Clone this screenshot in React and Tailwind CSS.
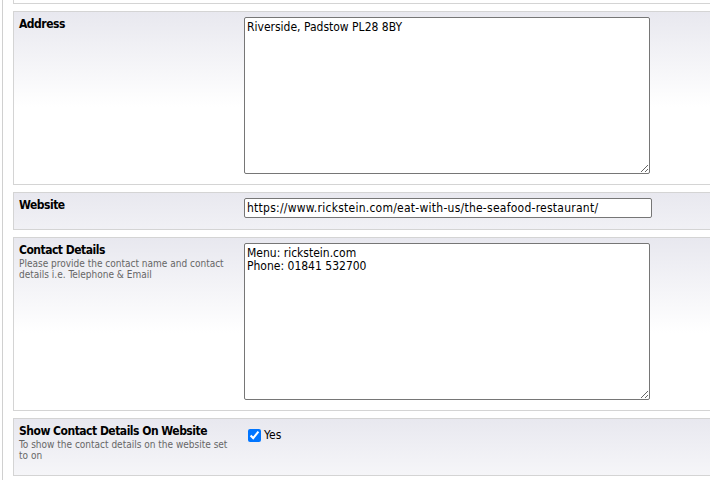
import { useState } from "react";

const panelBg =
  "bg-[linear-gradient(to_bottom,#e8e8ef_0px,#ffffff_95px)]";

function Row({ title, help, height, children }) {
  return (
    <div
      className={`flex w-[720px] border border-[#d4d4d4] ${panelBg} px-[5px] pt-[5px] ${height}`}
    >
      <div className="w-[225px] shrink-0">
        <div className="text-[12px] leading-[14px] font-bold tracking-[-0.5px] text-black">
          {title}
        </div>
        {help && (
          <div className="mt-[1px] pr-[6px] text-[10px] leading-[11px] text-[#666]">
            {help}
          </div>
        )}
      </div>
      <div className="flex-1">{children}</div>
    </div>
  );
}

export default function App() {
  const [address, setAddress] = useState("Riverside, Padstow PL28 8BY");
  const [website, setWebsite] = useState(
    "https://www.rickstein.com/eat-with-us/the-seafood-restaurant/"
  );
  const [contact, setContact] = useState(
    "Menu: rickstein.com\nPhone: 01841 532700"
  );
  const [show, setShow] = useState(true);

  return (
    <div className="w-[710px] h-[484px] overflow-hidden bg-white font-['DejaVu_Sans_Condensed','DejaVu_Sans',sans-serif] text-black">
      <div className="ml-[2px] h-[480px] border-l border-[#d0d0d0] pl-[10px]">
        <div className="flex flex-col gap-[7px]">
          {/* tail of the previous section */}
          <div className="h-[4px] w-[720px] border-l border-b border-[#d4d4d4] bg-white" />

          <Row title="Address" height="h-[174px]">
            <textarea
              value={address}
              onChange={(e) => setAddress(e.target.value)}
              className="block w-[406px] h-[157px] border border-[#767676] rounded-[2px] bg-white px-[2px] pt-[3px] pb-[2px] text-[12px] leading-[13px] text-black outline-none"
            />
          </Row>

          <Row title="Website" height="h-[38px]">
            <input
              type="text"
              value={website}
              onChange={(e) => setWebsite(e.target.value)}
              className="block w-[408px] h-[20px] border border-[#767676] rounded-[2px] bg-white px-[2px] text-[12px] leading-[13px] tracking-[0.25px] text-black outline-none"
            />
          </Row>

          <Row
            title="Contact Details"
            help="Please provide the contact name and contact details i.e. Telephone & Email"
            height="h-[174px]"
          >
            <textarea
              value={contact}
              onChange={(e) => setContact(e.target.value)}
              className="block w-[406px] h-[157px] border border-[#767676] rounded-[2px] bg-white px-[2px] pt-[3px] pb-[2px] text-[12px] leading-[13px] text-black outline-none"
            />
          </Row>

          <Row
            title="Show Contact Details On Website"
            help="To show the contact details on the website set to on"
            height="h-[58px]"
          >
            <label className="ml-[4px] mt-[4px] flex items-center gap-[3px] text-[12px] leading-[14px]">
              <input
                type="checkbox"
                checked={show}
                onChange={(e) => setShow(e.target.checked)}
                className="m-0 w-[13px] h-[13px] accent-[#0075ff]"
              />
              <span>Yes</span>
            </label>
          </Row>
        </div>
      </div>
    </div>
  );
}
